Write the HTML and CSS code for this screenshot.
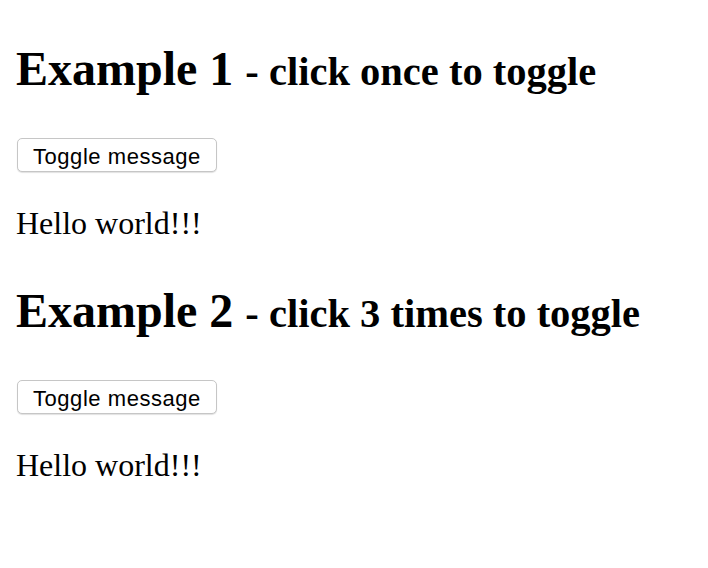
FILE: index.html
```html
<!DOCTYPE html>
<html>
<head>
<meta charset="utf-8">
<link rel="stylesheet" href="styles.css">
</head>
<body>
  <section class="example">
    <h1 class="title">Example 1 <span class="sub">- click once to toggle</span></h1>
    <div class="actions"><button class="toggle">Toggle message</button></div>
    <p class="message">Hello world!!!</p>
  </section>
  <section class="example">
    <h1 class="title">Example 2 <span class="sub">- click 3 times to toggle</span></h1>
    <div class="actions"><button class="toggle">Toggle message</button></div>
    <p class="message">Hello world!!!</p>
  </section>
</body>
</html>
```
FILE: styles.css
```css
html, body {
  background: #ffffff;
}
body {
  margin: 0;
  padding: 41px 16px 0;
  font-family: "Liberation Serif", "Times New Roman", serif;
  color: #000;
}
.example {
  display: block;
}
.title {
  margin: 0 0 42px;
  font-size: 48px;
  font-weight: bold;
  line-height: normal;
}
.sub {
  font-size: 40.5px;
}
.actions {
  height: 34px;
  margin: 0 0 33px 1px;
}
.toggle {
  height: 34px;
  padding: 3px 15px 0 15px;
  margin: 0;
  font-family: "Liberation Sans", Arial, sans-serif;
  font-size: 22px;
  letter-spacing: 0.55px;
  color: #000;
  background: #fff;
  border: 1px solid #c6c6c6;
  border-radius: 5px;
  box-shadow: 0 1px 1px rgba(0, 0, 0, 0.12);
}
.message {
  margin: 0 0 41px;
  font-size: 32px;
  line-height: normal;
}
```
